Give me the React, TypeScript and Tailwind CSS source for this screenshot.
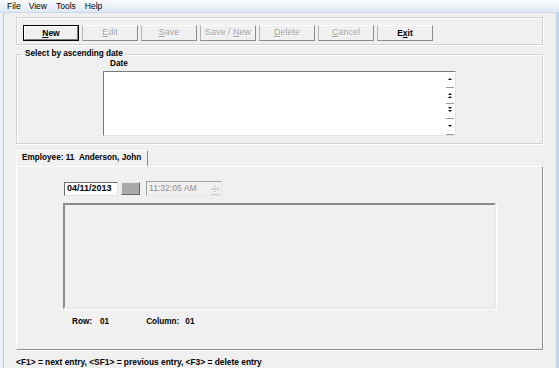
import React from "react";

const font = { fontFamily: '"Liberation Sans", Arial, sans-serif' };

function Btn({ label, u, bold, def }: { label: string; u: number; bold?: boolean; def?: boolean }) {
  const text = (
    <span>
      {label.slice(0, u)}
      <span className="underline">{label[u]}</span>
      {label.slice(u + 1)}
    </span>
  );
  if (def) {
    return (
      <div className="w-[56px] h-[16px] border border-black flex">
        <div className="flex-1 flex items-center justify-center border border-t-white border-l-white border-b-[#7a7a7a] border-r-[#7a7a7a] text-[8.5px] font-bold text-black">
          {text}
        </div>
      </div>
    );
  }
  return (
    <div
      className={
        "w-[56px] h-[16px] flex items-center justify-center border border-t-[#fdfdfd] border-l-[#b4b4b4] border-b-[#8c8c8c] border-r-[#8c8c8c] " +
        (bold ? "text-[8.5px] font-bold text-black" : "text-[9px] text-[#a3a3a3] [text-shadow:1px_1px_0_#ffffff]")
      }
    >
      {text}
    </div>
  );
}

function Arrow({ kind }: { kind: "up" | "pgup" | "pgdn" | "down" }) {
  return (
    <svg width="6" height="6" viewBox="0 0 6 6">
      {kind === "up" && <path d="M1 4 L3 2 L5 4 Z" fill="#111" />}
      {kind === "down" && <path d="M1 2 L3 4 L5 2 Z" fill="#111" />}
      {kind === "pgup" && (
        <g fill="#111">
          <path d="M1 3 L3 1 L5 3 Z" />
          <path d="M1 6 L3 4 L5 6 Z" />
        </g>
      )}
      {kind === "pgdn" && (
        <g fill="#111">
          <path d="M1 0 L3 2 L5 0 Z" />
          <path d="M1 3 L3 5 L5 3 Z" />
        </g>
      )}
    </svg>
  );
}

export default function App() {
  return (
    <div className="w-[559px] h-[368px] bg-[#f0f0f0] overflow-hidden flex flex-col text-black" style={font}>
      {/* menu bar */}
      <div className="h-[12px] flex items-center bg-gradient-to-b from-[#fbfcfe] to-[#dee8f4] text-[8.5px] leading-none">
        <span className="ml-[7px]">File</span>
        <span className="ml-[8px]">View</span>
        <span className="ml-[9px]">Tools</span>
        <span className="ml-[9px]">Help</span>
      </div>
      <div className="h-[1px] bg-[#cad7e8]" />
      <div className="flex flex-1">
        <div className="w-[4px] bg-[#eef2f7] border-r border-[#b8c7da]" />
        <div className="flex-1 flex flex-col pl-[12px]">
          {/* toolbar group */}
          <div className="mt-[4px] w-[527px] h-[28px] border border-[#d3d3d3] shadow-[inset_1px_1px_0_#ffffff,1px_1px_0_#ffffff] pl-[6px] pt-[7px]">
            <div className="flex gap-[3px]">
              <Btn label="New" u={0} def />
              <Btn label="Edit" u={0} />
              <Btn label="Save" u={0} />
              <Btn label="Save / New" u={7} />
              <Btn label="Delete" u={0} />
              <Btn label="Cancel" u={0} />
              <Btn label="Exit" u={1} bold />
            </div>
          </div>

          {/* select by ascending date */}
          <div className="relative mt-[9px] w-[527px] h-[90px] border border-[#d3d3d3] shadow-[inset_1px_1px_0_#ffffff,1px_1px_0_#ffffff] flex flex-col">
            <span className="absolute left-[6px] top-[-6px] bg-[#f0f0f0] px-[2px] text-[8.2px] font-bold leading-[10px]">
              Select by ascending date
            </span>
            <div className="mt-[2px] h-[14px] ml-[93px] flex items-center text-[8.2px] font-bold">Date</div>
            <div className="ml-[86px] w-[353px] h-[65px] bg-white border border-t-[#7a7a7a] border-l-[#7a7a7a] border-b-[#e4e4e4] border-r-[#e4e4e4] flex justify-end">
              <div className="w-[10px] flex flex-col">
                {(["up", "pgup", "pgdn", "down"] as const).map((k) => (
                  <div key={k} className="h-[16px] flex flex-col items-center justify-end">
                    <div className="h-[10px] flex items-center justify-center">
                      <Arrow kind={k} />
                    </div>
                    <div className="mt-[3px] w-[8px] h-[1px] bg-[#9a9a9a]" />
                  </div>
                ))}
              </div>
            </div>
          </div>

          {/* tab header */}
          <div className="mt-[6px] w-[132px] h-[16px] border-l border-t border-white border-r border-r-[#8c8c8c] flex items-center pl-[5px] text-[8.2px] font-bold">
            Employee: 11&nbsp;&nbsp;Anderson, John
          </div>

          {/* tab panel */}
          <div className="w-[527px] h-[184px] border border-t-white border-l-white border-b-[#8f8f8f] border-r-[#8f8f8f] shadow-[1px_1px_0_#fdfdfd] flex flex-col">
            <div className="mt-[14px] ml-[47px] h-[15px] flex items-center">
              <div className="w-[54px] h-[14px] bg-white border border-t-[#6e6e6e] border-l-[#6e6e6e] border-b-[#e2e2e2] border-r-[#e2e2e2] flex items-center pl-[2px] text-[9px] font-bold">
                04/11/2013
              </div>
              <div className="ml-[3px] w-[19px] h-[13px] bg-[#a9a9a9] border border-t-[#e6e6e6] border-l-[#e6e6e6] border-b-[#6a6a6a] border-r-[#6a6a6a]" />
              <div className="ml-[6px] w-[76px] h-[15px] border border-t-[#a0a0a0] border-l-[#a0a0a0] border-b-[#e6e6e6] border-r-[#e6e6e6] flex items-center justify-between pl-[2px] pr-[1px] text-[8.6px] text-[#8e8e8e]">
                <span>11:32:05 AM</span>
                <div className="w-[10px] h-[12px] flex flex-col items-center justify-center">
                  <svg width="10" height="12" viewBox="0 0 10 12">
                    <path d="M4 4 L5 3 L6 4 Z" fill="#9a9a9a" />
                    <line x1="1" y1="6" x2="9" y2="6" stroke="#b8b8b8" />
                    <path d="M4 8 L5 9 L6 8 Z" fill="#9a9a9a" />
                    <line x1="1" y1="11.5" x2="9" y2="11.5" stroke="#c8c8c8" />
                  </svg>
                </div>
              </div>
            </div>
            <div className="mt-[7px] ml-[46px] w-[433px] h-[106px] border-2 border-t-[#8c8c8c] border-l-[#8c8c8c] border-b-[#e9e9e9] border-r-[#e9e9e9] shadow-[1px_1px_0_#ffffff]" />
            <div className="mt-[7px] h-[12px] flex items-center text-[8.2px] font-bold">
              <span className="ml-[55px]">Row:</span>
              <span className="ml-[8px]">01</span>
              <span className="ml-[37px]">Column:</span>
              <span className="ml-[6px]">01</span>
            </div>
          </div>

          {/* status */}
          <div className="mt-[6px] h-[12px] flex items-center text-[8.4px] font-bold">
            &lt;F1&gt; = next entry, &lt;SF1&gt; = previous entry, &lt;F3&gt; = delete entry
          </div>
        </div>
        <div className="w-[4px] bg-[#c6d4e7] border-l border-[#e2e9f2]" />
      </div>
    </div>
  );
}
